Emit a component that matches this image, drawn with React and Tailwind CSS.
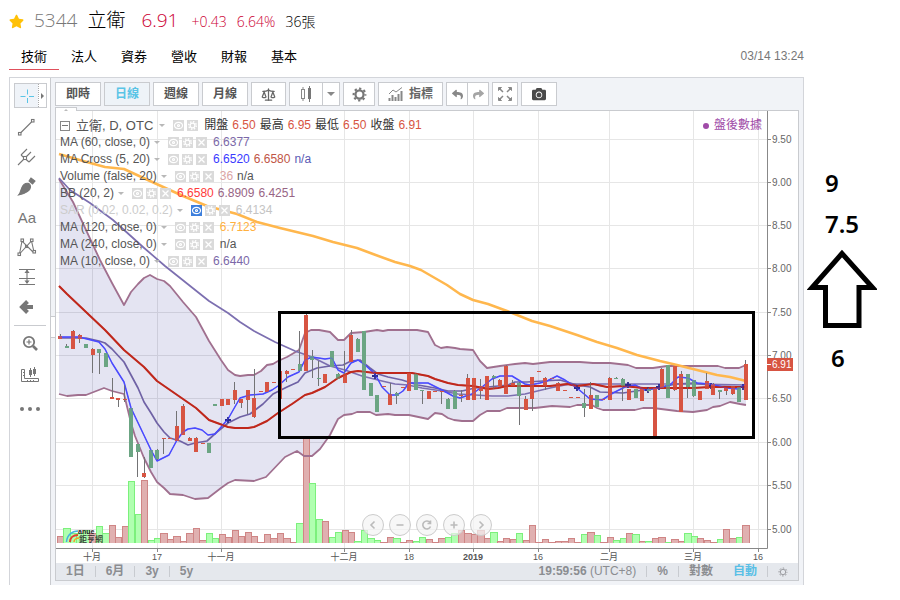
import React from "react";
import { FaStar, FaCamera, FaReply, FaShare } from "react-icons/fa";
import { Scale } from "lucide-react";

/* ---------- chart data ---------- */

const STEP = 6.466;
const X0 = 60.3;
const VOLUME_BASE = 543;
const barX = (i) => X0 + STEP * i;

// [colour, body top, body bottom, wick top, wick bottom]
const CANDLES = [
  ["r", 336, 339, 334, 339], ["g", 346, 348, 344, 348], ["r", 331, 349, 330, 349], ["r", 335, 339, 334, 343],
  ["g", 344, 348, 344, 348], ["r", 349, 355, 348, 373], ["g", 349, 353, 349, 374], ["g", 353, 367, 353, 367],
  ["r", 397, 399, 378, 399], ["r", 398, 400, 398, 407], ["r", 399, 400, 385, 402], ["g", 408, 457, 408, 457],
  ["g", 444, 452, 444, 477], ["r", 473, 477, 457, 478], ["g", 450, 468, 450, 468], ["g", 450, 459, 449, 460],
  ["r", 438, 439, 438, 454], ["r", 438, 439, 438, 439], ["r", 426, 441, 411, 441], ["r", 406, 435, 404, 435],
  ["r", 438, 441, 437, 441], ["r", 438, 452, 437, 452], ["r", 443, 444, 443, 444], ["g", 443, 453, 443, 453],
  ["g", 404, 406, 404, 406], ["r", 399, 406, 399, 406], ["r", 399, 405, 399, 405], ["r", 390, 400, 382, 404],
  ["r", 399, 403, 399, 408], ["r", 390, 400, 390, 414], ["r", 398, 417, 369, 418], ["r", 391, 392, 391, 392],
  ["r", 382, 392, 382, 392], ["r", 382, 383, 382, 383], ["r", 371, 399, 370, 399], ["r", 371, 374, 370, 382],
  ["r", 369, 370, 369, 370], ["g", 364, 371, 331, 371], ["r", 315, 371, 314, 371], ["g", 356, 360, 350, 378],
  ["g", 378, 379, 361, 386], ["r", 374, 383, 374, 383], ["g", 351, 367, 351, 367], ["g", 374, 379, 373, 379],
  ["r", 374, 383, 351, 383], ["r", 335, 362, 330, 362], ["g", 339, 352, 338, 352], ["g", 331, 390, 331, 390],
  ["g", 383, 396, 383, 396], ["g", 395, 412, 395, 412], ["r", 386, 387, 386, 387], ["r", 394, 405, 383, 405],
  ["g", 393, 396, 392, 404], ["r", 387, 388, 387, 388], ["r", 373, 391, 373, 391], ["g", 374, 390, 373, 390],
  ["g", 390, 391, 390, 404], ["r", 391, 399, 391, 399], ["r", 391, 392, 391, 392], ["r", 391, 392, 391, 404],
  ["g", 399, 409, 398, 409], ["g", 391, 409, 390, 409], ["r", 395, 396, 390, 402], ["r", 378, 400, 374, 400],
  ["r", 378, 400, 378, 400], ["r", 386, 391, 379, 399], ["r", 376, 400, 376, 400], ["g", 376, 378, 375, 389],
  ["r", 380, 386, 379, 386], ["r", 366, 394, 365, 394], ["r", 383, 386, 380, 386], ["g", 383, 396, 382, 425],
  ["r", 399, 410, 396, 410], ["r", 377, 399, 377, 411], ["r", 371, 372, 371, 372], ["r", 378, 386, 377, 390],
  ["r", 378, 379, 378, 379], ["r", 383, 391, 382, 391], ["r", 390, 391, 390, 391], ["r", 397, 398, 397, 398],
  ["r", 397, 398, 397, 398], ["g", 403, 408, 389, 417], ["r", 395, 409, 382, 409], ["g", 395, 407, 395, 407],
  ["r", 399, 400, 399, 400], ["r", 378, 400, 377, 400], ["g", 378, 379, 377, 379], ["g", 379, 386, 378, 401],
  ["r", 389, 400, 389, 400], ["g", 389, 398, 389, 398], ["r", 389, 401, 389, 401], ["g", 389, 391, 388, 392],
  ["r", 388, 437, 388, 437], ["r", 369, 388, 368, 388], ["g", 365, 398, 365, 398], ["r", 366, 390, 366, 391],
  ["r", 374, 412, 371, 412], ["g", 374, 387, 374, 398], ["g", 380, 396, 380, 397], ["r", 391, 400, 391, 400],
  ["r", 381, 389, 373, 389], ["r", 384, 395, 383, 395], ["g", 390, 392, 390, 399], ["r", 388, 391, 388, 395],
  ["r", 386, 394, 386, 395], ["g", 387, 402, 387, 402], ["r", 364, 400, 360, 400],
];

// colour + top edge of each volume bar
const VOLUMES =
  "r536 g528 g533 g533 g530 r533 g526 g533 r525 r537 r526 g481 g514 r480 g540 g538 r533 r539 r536 r541 r533 r528 r540 g533 g538 r534 r537 r530 r536 r532 r536 r542 r534 r538 r533 r538 r542 g523 r438 g483 g519 r521 g537 g532 r530 r532 g541 g530 g538 g540 r542 r537 g538 r542 r540 g541 g537 r539 r542 r538 g537 g533 r530 r533 r534 r530 r538 g532 r541 r538 r539 g533 r540 r525 r542 r539 r542 r541 r541 r538 r542 g534 r532 g535 r542 r537 g540 g538 r533 g534 r541 g541 r538 r537 g542 r539 r541 g533 g536 r538 r540 r542 g539 r529 r538 g537 r525"
    .split(" ")
    .map((v) => [v[0], Number(v.slice(1))]);

const BB_UPPER =
  "59,179 73,202 100,260 112,283 124,305 131,292 138,284 144,278 150,275 157,279 164,281 170,286 183,302 196,317 209,341 221,360 228,370 235,375 240,376 248,375 254,375 261,371 267,365 273,364 278,361 287,357 299,350 305,333 311,330 319,330 330,332 338,340 344,340 351,333 364,332 377,330 383,331 388,330 417,330 428,332 435,345 441,348 447,347 455,348 460,349 473,350 480,361 487,368 500,366 515,364 525,363 533,364 550,362 580,362 593,363 610,363 628,365 636,368 653,368 667,366 718,366 725,368 739,368 746,365";
const BB_LOWER =
  "59,394 67,396 78,395 86,395 104,388 112,391 124,394 131,423 135,436 144,458 151,472 157,482 164,488 170,494 183,495 195,499 208,498 221,488 228,483 235,480 254,481 266,477 285,457 297,451 304,456 312,456 320,449 330,435 338,419 344,415 352,414 357,412 370,412 376,415 388,414 395,415 409,415 428,419 435,413 442,414 448,418 454,420 462,421 473,421 480,415 487,411 500,411 507,408 523,408 535,408 552,406 570,407 577,405 592,405 597,408 603,410 635,410 643,408 653,408 677,411 693,412 707,410 713,407 720,406 730,402 740,404 746,405";
const BB_AREA = BB_UPPER + " " + BB_LOWER.split(" ").reverse().join(" ");
const MA120 =
  "59,154 83,161 105,167 124,169 150,181 183,196 207,206 237,214 257,222 280,228 313,236 333,242 357,248 373,254 395,262 410,266 421,270 447,285 460,294 473,300 488,304 507,311 532,321 550,326 577,335 597,342 617,348 637,355 660,361 677,365 697,370 717,375 730,377 746,381";
const MA60 =
  "59,178 70,190 90,203 113,220 143,247 165,266 209,301 228,313 240,322 254,331 275,342 295,351 312,357 330,366 345,370 362,376 382,381 395,384 408,385 422,388 442,391 458,394 475,395 492,396 508,396 525,394 550,388 570,384 593,384 643,384 697,384 745,385";
const MA10 =
  "59,338 86,338 99,341 105,343 112,349 124,362 131,375 138,388 144,402 151,413 157,423 164,432 170,438 180,441 188,445 195,443 207,441 217,432 228,423 240,417 250,414 263,404 273,394 287,387 298,382 305,373 317,368 330,366 343,365 351,361 360,360 370,368 378,374 388,377 402,380 418,385 435,388 448,391 462,391 475,388 488,387 508,385 515,382 527,382 543,381 560,380 577,385 590,387 600,392 623,393 643,390 660,387 677,384 693,383 717,386 745,387";
const MA5 =
  "59,337 79,337 87,339 99,342 105,349 112,363 124,382 131,408 151,450 157,461 169,455 177,440 183,432 188,429 195,428 202,430 208,435 215,434 228,419 240,398 250,395 263,394 272,390 278,386 288,377 299,372 305,360 312,357 325,359 332,358 338,370 344,373 351,363 358,360 365,365 375,374 382,387 390,395 397,395 403,391 409,383 428,383 442,390 453,396 460,398 472,394 482,387 492,379 500,376 512,376 525,384 530,385 540,383 547,381 557,376 565,380 577,388 590,399 602,400 613,393 625,387 635,385 645,390 660,388 670,385 678,377 688,378 697,383 710,384 727,388 738,389 745,384";
const MA20 =
  "59,286 67,294 105,330 124,350 144,367 157,381 183,399 196,408 209,420 228,427 235,428 248,428 254,427 267,421 278,413 292,404 305,395 312,393 325,387 338,378 351,372 358,371 375,373 412,373 428,376 435,379 448,383 458,385 473,386 488,389 498,388 507,386 550,386 567,384 577,386 593,384 607,387 623,386 643,388 693,388 710,387 745,387";
const CROSSES = [[228, 420], [375, 376], [577, 388], [628, 385], [648, 390], [659, 387], [711, 386], [743, 387]];

const PRICES = [
  ["9.50", 139], ["9.00", 182], ["8.50", 225], ["8.00", 268], ["7.50", 312],
  ["7.00", 355], ["6.50", 398], ["6.00", 442], ["5.50", 485], ["5.00", 529],
];
const DATES = [
  ["十月", 92], ["17", 157], ["十一月", 221], ["十二月", 344], ["18", 409],
  ["2019", 473, true], ["16", 538], ["二月", 609], ["三月", 693], ["16", 758],
];

const BODY = { r: "#d75442", g: "#6ba583" };
const VOL_FILL = { r: "#e0b0b0", g: "#b0ffb0" };
const VOL_LINE = { r: "#cf8585", g: "#7cf07c" };

function PriceChart() {
  return (
    <svg
      viewBox="56 111 742 452"
      className="block h-auto w-full font-['Liberation_Sans','Noto_Sans_CJK_TC',sans-serif]"
      role="img"
      aria-label="立衛 D OTC"
    >
      <g stroke="#e6e6e6" shapeRendering="crispEdges">
        {PRICES.map(([p, y]) => <line key={p} x1="56" x2="767" y1={y + 0.5} y2={y + 0.5} />)}
        {DATES.map(([, x]) => <line key={x} x1={x + 0.5} x2={x + 0.5} y1="111" y2="548" />)}
      </g>

      <polygon points={BB_AREA} fill="#000080" fillOpacity="0.105" />

      <g shapeRendering="crispEdges">
        {VOLUMES.map(([c, y], i) => (
          <path
            key={i}
            d={`M${Math.round(barX(i) - 3.3)}.5 ${VOLUME_BASE}V${y}.5H${Math.round(barX(i) + 3)}.5V${VOLUME_BASE}`}
            fill={VOL_FILL[c]}
            stroke={VOL_LINE[c]}
          />
        ))}
      </g>

      <g fill="none" strokeLinejoin="round">
        <polyline points={BB_UPPER} stroke="#a0708f" strokeWidth="1.8" />
        <polyline points={BB_LOWER} stroke="#a0708f" strokeWidth="1.8" />
        <polyline points={MA120} stroke="#ffb74d" strokeWidth="2.5" />
      </g>

      <g fill="none" strokeLinejoin="round" strokeWidth="1.7">
        <polyline points={MA60} stroke="#7c6fb0" />
        <polyline points={MA10} stroke="#6f62a5" />
        <polyline points={MA5} stroke="#4a4aff" strokeWidth="1.5" />
        <polyline points={MA20} stroke="#c0281c" strokeWidth="2" />
      </g>
      <g stroke="#2a2a90" strokeWidth="1.8">
        {CROSSES.map(([x, y]) => <path key={x} d={`M${x - 3} ${y}h6M${x} ${y - 3}v6`} />)}
      </g>

      <g shapeRendering="crispEdges">
        {CANDLES.map(([c, top, bottom, high, low], i) => (
          <g key={i}>
            <rect x={Math.round(barX(i) - 0.5)} y={high} width="1" height={low - high} fill="#737375" />
            <rect x={Math.round(barX(i) - 2)} y={top} width="4" height={bottom - top} fill={BODY[c]} />
          </g>
        ))}
      </g>
      <polyline points={MA20} fill="none" stroke="#c0281c" strokeOpacity="0.5" strokeWidth="1.5" />
      <polyline points={MA5} fill="none" stroke="#4a4aff" strokeOpacity="0.5" />

      {/* site logo */}
      <g fill="none" strokeWidth="1.5">
        <path d="M66.500 542C67 535 72 531 78 531" stroke="#46b4dc" />
        <path d="M70 542C70 538 73 535 78 535" stroke="#e04030" strokeWidth="2" />
        <path d="M74 542C74 540 76 538 79 538" stroke="#f5a020" />
      </g>
      <text x="78" y="534" fontSize="7" fontWeight="700" fill="#222">anue</text>
      <text x="79" y="542" fontSize="8" fontWeight="500" fill="#333">鉅亨網</text>

      {/* axes */}
      <path d="M56 548.500H767.500V111" fill="none" stroke="#888" />
      <g fill="#666" fontSize="10">
        {PRICES.map(([p, y]) => (
          <g key={p}>
            <path d={`M767 ${y + 0.5}h4`} stroke="#888" />
            <text x="772" y={y + 4}>{p}</text>
          </g>
        ))}
      </g>
      <g fill="#555" fontSize="9" textAnchor="middle">
        {DATES.map(([d, x, bold]) => (
          <g key={x}>
            <path d={`M${x + 0.5} 549v3`} stroke="#888" />
            <text x={x} y="560" fontWeight={bold ? 700 : 400}>{d}</text>
          </g>
        ))}
      </g>
      <rect x="767" y="358" width="26" height="13" fill="#d75442" />
      <path d="M767 364.500h4" stroke="#fff" />
      <text x="772" y="368" fontSize="10" fill="#fff">6.91</text>

      <rect x="279.500" y="312.500" width="474" height="125" fill="none" stroke="#000" strokeWidth="3" />
    </svg>
  );
}

/* ---------- legend over the chart ---------- */

function Caret() {
  return <span aria-hidden="true" className="border-x-[3px] border-t-[3px] border-x-transparent border-t-[#b8b8b8]" />;
}

const MINI = {
  eye: (
    <g fill="none" stroke="#fff" strokeWidth="1.200">
      <ellipse cx="5.500" cy="5.500" rx="4" ry="3.200" />
      <circle cx="5.500" cy="5.500" r="1" />
    </g>
  ),
  gear: (
    <g fill="none" stroke="#fff">
      <circle cx="5.500" cy="5.500" r="2.400" strokeWidth="1.300" />
      <circle cx="5.500" cy="5.500" r="3.800" strokeWidth="1.400" strokeDasharray="1.500 1.480" />
    </g>
  ),
  close: <path d="M2.500 2.500l6 6M8.500 2.500l-6 6" stroke="#fff" strokeWidth="1.300" />,
};

function MiniButton({ kind, label, active }) {
  return (
    <button aria-label={label} className={active ? "size-[11px] bg-[#3d7fdc]" : "size-[11px] bg-[#dadada]"}>
      <svg viewBox="0 0 11 11" className="block size-full">{MINI[kind]}</svg>
    </button>
  );
}

const STUDIES = [
  { name: "MA (60, close, 0)", values: [["6.6377", "text-[#7b68a8]"]] },
  { name: "MA Cross (5, 20)", values: [["6.6520", "text-[#3a3aff]"], ["6.6580", "text-[#bf5546]"], ["n/a", "text-[#5a5ab4]"]] },
  { name: "Volume (false, 20)", values: [["36", "text-[#dba5a5]"], ["n/a", "text-[#555]"]] },
  { name: "BB (20, 2)", values: [["6.6580", "text-[#ff3b3b]"], ["6.8909", "text-[#986585]"], ["6.4251", "text-[#986585]"]] },
  { name: "SAR (0.02, 0.02, 0.2)", hidden: true, values: [["6.4134", "text-[#c4c4c4]"]] },
  { name: "MA (120, close, 0)", values: [["6.7123", "text-[#ffb040]"]] },
  { name: "MA (240, close, 0)", values: [["n/a", "text-[#555]"]] },
  { name: "MA (10, close, 0)", values: [["6.6440", "text-[#7b68a8]"]] },
];

function Legend() {
  return (
    <div className="absolute top-[6px] left-[4px] text-[12px] leading-[17px] whitespace-nowrap text-[#555]">
      <div className="flex h-[17px] items-center">
        <button aria-label="collapse" className="mr-[6px] flex size-[10px] items-center justify-center border border-[#888]">
          <span className="h-px w-[6px] bg-[#777]" />
        </button>
        <span className="mr-[6px] text-[13px]">立衛, D, OTC</span>
        <Caret />
        <span className="mr-[6px] ml-[8px] flex gap-[3px]">
          <MiniButton kind="eye" label="顯示" />
          <MiniButton kind="gear" label="設定" />
        </span>
        {[["開盤", "6.50"], ["最高", "6.95"], ["最低", "6.50"], ["收盤", "6.91"]].map(([k, v]) => (
          <span key={k} className="mr-1 flex gap-1">
            <span className="text-[#333]">{k}</span>
            <span className="text-[#d75442]">{v}</span>
          </span>
        ))}
      </div>
      {STUDIES.map((s) => (
        <div key={s.name} className="flex h-[17px] items-center">
          <span className={s.hidden ? "mr-1 text-[#ccc]" : "mr-1"}>{s.name}</span>
          <Caret />
          <span className="mr-[6px] ml-[8px] flex gap-[3px]">
            <MiniButton kind="eye" label="顯示" active={s.hidden} />
            <MiniButton kind="gear" label="設定" />
            <MiniButton kind="close" label="移除" />
          </span>
          <span className="flex gap-1">
            {s.values.map(([v, c]) => <span key={v} className={c}>{v}</span>)}
          </span>
        </div>
      ))}
    </div>
  );
}

const NAV = [
  ["向左", "M12.500 7.500L9 11l3.500 3.500"],
  ["縮小", "M7.500 11h7"],
  ["重設", "M14.500 12.500A4 4 0 1 1 14 8.500M14.500 6.500v3h-3"],
  ["放大", "M7.500 11h7M11 7.500v7"],
  ["向右", "M9.500 7.500L13 11l-3.500 3.500"],
];

function ChartNav() {
  return (
    <div className="absolute bottom-[27px] left-1/2 flex -translate-x-1/2 gap-[5px]">
      {NAV.map(([label, d]) => (
        <button key={label} aria-label={label} className="size-[22px] rounded-full border border-[#ccc] bg-[#f4f4f4]/70">
          <svg viewBox="1 1 20 20" className="block size-full" fill="none" stroke="#bbb" strokeWidth="1.600">
            <path d={d} />
          </svg>
        </button>
      ))}
    </div>
  );
}

/* ---------- toolbars ---------- */

function GearIcon({ className, thin }) {
  return (
    <svg viewBox="0 0 16 16" className={className} fill="none" stroke="currentColor">
      <circle cx="8" cy="8" r="4.300" strokeWidth={thin ? 1.3 : 2.4} />
      <circle cx="8" cy="8" r="6.300" strokeWidth={thin ? 1.6 : 2.2} strokeDasharray="2.400 2.548" strokeDashoffset="1.200" />
    </svg>
  );
}

const toolButton = "flex h-[24px] items-center justify-center border border-[#c9cbcf] bg-white text-[#666]";

function TopToolbar() {
  return (
    <div className="flex h-[32px] items-center gap-[3px] text-[12px] font-bold">
      {["即時", "日線", "週線", "月線"].map((t) => (
        <button
          key={t}
          className={
            t === "日線"
              ? "h-[24px] w-[46px] border border-[#c9cbcf] bg-[#eef3f8] text-[#59c4e6]"
              : "h-[24px] w-[46px] border border-[#c9cbcf] bg-white text-[#555]"
          }
        >
          {t}
        </button>
      ))}
      <button aria-label="比較" className={`${toolButton} w-[35px]`}>
        <Scale className="size-[15px]" strokeWidth={2} />
      </button>
      <div className="flex w-[51px]">
        <button aria-label="K線" className={`${toolButton} flex-1`}>
          <svg viewBox="0 0 12 18" className="h-[18px] w-[12px]">
            <path d="M3 2v14" stroke="#888" />
            <rect x="1.500" y="4.500" width="3" height="9" fill="#fff" stroke="#888" />
            <path d="M9.500 1v16" stroke="#777" />
            <rect x="8" y="3" width="3" height="11" fill="#777" />
          </svg>
        </button>
        <button aria-label="K線選單" className={`${toolButton} w-[17px] border-l-0`}>
          <span className="border-x-[4px] border-t-[4px] border-x-transparent border-t-[#888]" />
        </button>
      </div>
      <button aria-label="設定" className={`${toolButton} w-[32px]`}>
        <GearIcon className="size-[15px] text-[#777]" />
      </button>
      <button className={`${toolButton} w-[65px] gap-[6px]`}>
        <svg viewBox="0 0 15 14" className="h-[14px] w-[15px]" stroke="#888" fill="none">
          <path d="M1 7l4-4 3 2 6-4.500" />
          <path d="M1.500 14v-3M4.500 14V8M7.500 14v-4M10.500 14V7M13.500 14V4" strokeWidth="2" />
        </svg>
        指標
      </button>
      <div className="flex w-[43px]">
        <button aria-label="復原" className={`${toolButton} flex-1`}>
          <FaReply className="size-[11px] text-[#888]" />
        </button>
        <button aria-label="重做" className={`${toolButton} flex-1 border-l-0`}>
          <FaShare className="size-[11px] text-[#a5a5a5]" />
        </button>
      </div>
      <button aria-label="全螢幕" className={`${toolButton} w-[26px]`}>
        <svg viewBox="0 0 16 16" className="size-[16px]" fill="#888" stroke="#888" strokeWidth="1.500">
          <path d="M3 3l3 3M13 3l-3 3M3 13l3-3M13 13l-3-3" />
          <path d="M1.500 1.500h3l-3 3zM14.500 1.500h-3l3 3zM1.500 14.500h3l-3-3zM14.500 14.500h-3l3-3z" strokeWidth="1" />
        </svg>
      </button>
      <button aria-label="截圖" className={`${toolButton} w-[36px]`}>
        <FaCamera className="size-[14px] text-[#4a4a4a]" />
      </button>
    </div>
  );
}

function DrawIcon({ children }) {
  return (
    <svg viewBox="0 0 20 20" className="size-[20px]" fill="none" stroke="#777" strokeWidth="1.100">
      {children}
    </svg>
  );
}

const DRAW_TOOLS = [
  ["趨勢線", <DrawIcon key="a"><path d="M4 15.500L14.500 5" /><rect x="1.500" y="15.500" width="2.500" height="2.500" /><rect x="14.500" y="2.500" width="2.500" height="2.500" /></DrawIcon>],
  ["音叉", <DrawIcon key="b"><path d="M1 18L14 5M4 8l8 7M4 8l6-6M12 15l6-6" /><rect x="6.500" y="9.500" width="3" height="3" fill="#fff" /></DrawIcon>],
  ["筆刷", <DrawIcon key="c"><path d="M1.500 18C5 14 3 11 7 7.500c3-2.500 6-1 6.500 1.500.500 4-5 8-12 9zM12 4l2-3 4 3-2.500 3z" fill="#777" /></DrawIcon>],
  ["文字", <span key="d" className="text-[15px] leading-none text-[#777]">Aa</span>],
  ["型態", <DrawIcon key="e"><path d="M2.500 17L5 4l11 11M2.500 17L14.500 4 17 15" /><g fill="#fff"><rect x="1" y="16" width="2.500" height="2.500" /><rect x="4" y="2" width="2.500" height="2.500" /><rect x="13.500" y="2" width="2.500" height="2.500" /><rect x="16" y="13.500" width="2.500" height="2.500" /><rect x="8.500" y="8.500" width="2" height="2" /></g></DrawIcon>],
  ["預測", <DrawIcon key="f"><path d="M2 2.500h16M2 11.500h16M2 17.500h16M10 3v13" /><path d="M8.500 5.500l1.500-2 1.500 2zM8.500 14l1.500 2 1.500-2z" fill="#777" /></DrawIcon>],
  ["返回", <DrawIcon key="g"><path d="M16 10H6M10.500 4.500L5 10l5.500 5.500" strokeWidth="4" /></DrawIcon>],
];

function DrawToolbar() {
  return (
    <div className="w-[41px] shrink-0 border-r border-[#c9cbcf] bg-white pt-[5px]">
      <div className="ml-[4px] flex h-[25px] w-[33px] border border-[#c9cbcf]">
        <button aria-label="十字線" className="flex flex-1 items-center justify-center bg-[#eff3f8]">
          <svg viewBox="0 0 14 14" className="size-[14px]" stroke="#59c4e6">
            <path d="M.500 7.500h5M9 7.500h5M7.500.500v5M7.500 9v5" />
          </svg>
        </button>
        <button aria-label="游標選單" className="flex w-[8px] items-center justify-center border-l border-dotted border-[#aaa]">
          <span className="border-y-[3px] border-l-[3px] border-y-transparent border-l-[#777]" />
        </button>
      </div>
      <div className="mt-[4px] flex flex-col items-center pr-[6px]">
        {DRAW_TOOLS.map(([label, icon]) => (
          <button key={label} aria-label={label} className="flex h-[30px] w-[34px] items-center justify-center">
            {icon}
          </button>
        ))}
      </div>
      <div className="mx-[4px] mt-[3px] border-t border-[#c9cbcf]" />
      <div className="flex flex-col items-center">
        <button aria-label="放大" className="flex h-[34px] w-[34px] items-center justify-center">
          <svg viewBox="0 0 16 16" className="size-[16px]" fill="none" stroke="#777">
            <circle cx="7" cy="7" r="5.200" strokeWidth="1.800" />
            <path d="M11 11l4 4" strokeWidth="2.600" />
            <path d="M4.500 7h5M7 4.500v5" strokeWidth="1.200" />
          </svg>
        </button>
        <button aria-label="測量" className="flex h-[30px] w-[34px] items-center justify-center">
          <svg viewBox="0 0 20 16" className="h-[16px] w-[20px]" fill="none" stroke="#777">
            <path d="M1.500 2.500h3v9h14v3h-17z" />
            <path d="M3 5.500h1M3 8.500h1M7.500 13v1M10.500 13v1M13.500 13v1" />
            <path d="M10.500 1v9M14.500 0v9" />
            <path d="M10.500 3v5M14.500 2v5" strokeWidth="3" />
          </svg>
        </button>
        <button aria-label="更多" className="mt-[4px] flex h-[30px] w-[34px] items-center justify-center gap-[4px]">
          <span className="size-[4px] rounded-full bg-[#777]" />
          <span className="size-[4px] rounded-full bg-[#777]" />
          <span className="size-[4px] rounded-full bg-[#777]" />
        </button>
      </div>
    </div>
  );
}

function Divider() {
  return <span className="h-[11px] w-px bg-[#c8cbd0]" />;
}

function RangeBar() {
  return (
    <div className="flex h-[17px] items-center bg-[#e5e8ed] text-[12px] leading-[17px] font-bold text-[#8b8d91]">
      <div className="flex items-center gap-[10px] pl-[10px]">
        <button>1日</button>
        <Divider />
        <button>6月</button>
        <Divider />
        <button>3y</button>
        <Divider />
        <button>5y</button>
      </div>
      <div className="ml-auto flex items-center gap-[10px] pr-[10px]">
        <span>19:59:56 <span className="font-normal">(UTC+8)</span></span>
        <Divider />
        <button>%</button>
        <Divider />
        <button>對數</button>
        <button className="ml-[10px] text-[#59bfe6]">自動</button>
        <Divider />
        <button aria-label="圖表設定"><GearIcon thin className="size-[10px]" /></button>
      </div>
    </div>
  );
}

/* ---------- page ---------- */

const TABS = ["技術", "法人", "資券", "營收", "財報", "基本"];

function Header() {
  return (
    <header className="font-['Open_Sans','Noto_Sans_CJK_TC',sans-serif]">
      <div className="flex h-[42px] items-center">
        <FaStar className="size-[15px] text-[#ffc107]" />
        <div className="ml-[10px] flex items-baseline text-[19px] leading-[28px] font-light">
          <span className="text-[#777]">5344</span>
          <span className="ml-[10px] text-black">立衛</span>
          <span className="ml-[16px] text-[#cc0033]">6.91</span>
          <span className="ml-[13px] text-[14px] text-[#cc0033]">+0.43</span>
          <span className="ml-[10px] text-[14px] text-[#cc0033]">6.64%</span>
          <span className="ml-[10px] text-[14px] text-black">36張</span>
        </div>
      </div>
      <div className="flex h-[28px] items-center">
        <nav className="flex h-full text-[13px] text-black">
          {TABS.map((t, i) => (
            <a
              key={t}
              href="#"
              className={
                i === 0
                  ? "w-[50px] border-b border-[#e0505c] text-center leading-[28px]"
                  : "w-[50px] border-b border-transparent text-center leading-[28px]"
              }
            >
              {t}
            </a>
          ))}
        </nav>
        <time className="ml-auto font-['Liberation_Sans',sans-serif] text-[12px] text-[#777]">03/14 13:24</time>
      </div>
    </header>
  );
}

export default function App() {
  return (
    <div className="flex w-full bg-white font-['Liberation_Sans','Noto_Sans_CJK_TC',sans-serif]">
      <main className="min-w-0 flex-1 pl-[9px]">
        <Header />
        <section className="mt-[7px] flex border border-b-0 border-[#d3d5da] bg-[#f1f3f7]">
          <DrawToolbar />
          <div className="relative min-w-0 flex-1 px-[4px] pb-[4px]">
            <button aria-label="收合工具列" className="absolute top-[238px] left-0 h-[22px] w-[4px] border-y border-[#c9cbcf] bg-white" />
            <button aria-label="收合圖例" className="absolute top-[29px] left-[4px] flex h-[4px] w-[22px] items-center justify-center border-x border-t border-[#c9cbcf] bg-white">
              <span className="border-x-[2px] border-b-[2px] border-x-transparent border-b-[#bbb]" />
            </button>
            <TopToolbar />
            <div className="border border-[#c9cbcf] bg-white">
              <div className="relative">
                <PriceChart />
                <Legend />
                <p className="absolute top-[6px] right-[36px] flex items-center gap-[5px] text-[12px] leading-[17px] text-[#a04ba8]">
                  <span className="size-[6px] rounded-full bg-[#a04ba8]" />
                  盤後數據
                </p>
                <ChartNav />
              </div>
              <RangeBar />
            </div>
          </div>
        </section>
      </main>
      <aside className="w-[96px] shrink-0 pt-[162px] pl-[3px] font-['Noto_Sans',sans-serif] text-[24px] leading-[41px] font-semibold text-black">
        <p className="pl-[18px]">9</p>
        <p className="pl-[18px]">7.5</p>
        <svg viewBox="0 0 70 80" className="mt-[5px] h-[80px] w-[70px]" fill="none" stroke="#000" strokeWidth="5">
          <path d="M35 4.500L5 38.500h13.500v38H52v-38h13.500z" />
        </svg>
        <p className="mt-[8px] pl-[24px]">6</p>
      </aside>
    </div>
  );
}
